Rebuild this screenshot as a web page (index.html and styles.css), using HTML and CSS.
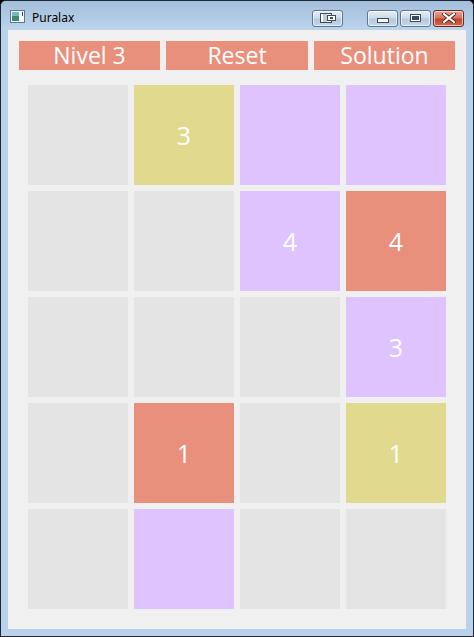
FILE: index.html
```html
<!DOCTYPE html>
<html lang="en">
<head>
  <meta charset="UTF-8">
  <title>Puralax</title>
  <link rel="stylesheet" href="styles.css">
</head>
<body>
  <div class="window">
    <div class="titlebar">
      <svg class="app-icon" width="16" height="14" viewBox="0 0 16 14">
        <rect x="0.5" y="0.5" width="14" height="12" fill="#f4f8fb" stroke="#5d7890"/>
        <rect x="2" y="2" width="7" height="9" fill="#3e8a6e"/>
        <rect x="2" y="2" width="7" height="4" fill="#6fb7c9"/>
        <rect x="12" y="2" width="1" height="4" fill="#2c4a66"/>
      </svg>
      <span class="title">Puralax</span>
      <div class="caption-btn dock">
        <svg width="16" height="10" viewBox="0 0 16 10">
          <rect x="0.5" y="0.5" width="11" height="9" fill="#fff" stroke="#3a4b5e"/>
          <line x1="4" y1="1" x2="4" y2="9" stroke="#8899aa"/>
          <line x1="6" y1="1" x2="6" y2="9" stroke="#8899aa"/>
          <rect x="7.5" y="2.5" width="8" height="5" fill="#fff" stroke="#3a4b5e"/>
          <rect x="10" y="4" width="3" height="2" fill="#3a4b5e"/>
        </svg>
      </div>
      <div class="caption-group">
        <div class="caption-btn"><span class="min-glyph"></span></div>
        <div class="caption-btn"><span class="max-glyph"></span></div>
        <div class="caption-btn close">
          <svg width="14" height="10" viewBox="0 0 14 10">
            <path d="M2 1 L12 9 M12 1 L2 9" stroke="#3a1a14" stroke-width="3.6" stroke-linecap="square"/>
            <path d="M2 1 L12 9 M12 1 L2 9" stroke="#fff" stroke-width="2.2" stroke-linecap="square"/>
          </svg>
        </div>
      </div>
    </div>

    <div class="client">
      <div class="toolbar">
        <button class="btn">Nivel 3</button>
        <button class="btn">Reset</button>
        <button class="btn">Solution</button>
      </div>

      <div class="board">
        <div class="cell"></div>
        <div class="cell yellow">3</div>
        <div class="cell purple"></div>
        <div class="cell purple"></div>

        <div class="cell"></div>
        <div class="cell"></div>
        <div class="cell purple">4</div>
        <div class="cell red">4</div>

        <div class="cell"></div>
        <div class="cell"></div>
        <div class="cell"></div>
        <div class="cell purple">3</div>

        <div class="cell"></div>
        <div class="cell red">1</div>
        <div class="cell"></div>
        <div class="cell yellow">1</div>

        <div class="cell"></div>
        <div class="cell purple"></div>
        <div class="cell"></div>
        <div class="cell"></div>
      </div>
    </div>
  </div>
</body>
</html>
```

FILE: styles.css
```css
html, body {
  margin: 0;
  padding: 0;
}
body {
  width: 474px;
  height: 637px;
  font-family: "Open Sans", "Noto Sans", sans-serif;
  background: #000;
}
.window {
  box-sizing: border-box;
  width: 474px;
  height: 637px;
  border: 1px solid #1c2733;
  border-radius: 6px 6px 0 0;
  background: #b9d1ea;
  padding: 0 7px 7px 7px;
  display: flex;
  flex-direction: column;
}
.titlebar {
  height: 29px;
  margin: 0 -7px;
  padding: 0 9px 0 9px;
  border-radius: 5px 5px 0 0;
  background: linear-gradient(to bottom, #a3bedb 0%, #b0c9e3 50%, #bcd4ec 100%);
  display: flex;
  align-items: center;
}
.app-icon {
  margin-top: 2px;
  margin-right: 6px;
}
.title {
  font-family: "Noto Sans", sans-serif;
  font-size: 12px;
  color: #000;
  margin-top: 3px;
  flex: 1;
}
.caption-group {
  display: flex;
  gap: 2px;
  margin-left: 24px;
}
.caption-btn {
  box-sizing: border-box;
  width: 31px;
  height: 17px;
  margin-top: 5px;
  border: 1px solid #5f7791;
  border-radius: 3px;
  background: linear-gradient(to bottom, #e6eef7 0%, #cddbea 45%, #b4c8de 55%, #c7d8ea 100%);
  box-shadow: inset 0 0 0 1px rgba(255,255,255,0.6);
  display: flex;
  align-items: center;
  justify-content: center;
}
.caption-btn.close {
  border-color: #6b2a20;
  background: linear-gradient(to bottom, #e8a493 0%, #d5765f 45%, #c1432c 55%, #d66a4f 100%);
}
.min-glyph {
  width: 10px;
  height: 3px;
  margin-top: 4px;
  background: #fff;
  border: 1px solid #3a4b5e;
}
.max-glyph {
  box-sizing: border-box;
  width: 11px;
  height: 8px;
  border: 1px solid #3a4b5e;
  background: #fff;
  box-shadow: inset 0 0 0 1px #fff, inset 0 0 0 3px #3a4b5e;
}
.client {
  flex: 1;
  background: #f0f0f0;
  padding: 11px 11px 0 11px;
}
.toolbar {
  display: grid;
  grid-template-columns: 141px 142px 141px;
  gap: 6px;
}
.btn {
  height: 29px;
  border: none;
  padding: 0;
  background: #e8907b;
  color: #fff;
  font-family: "Open Sans", "Noto Sans", sans-serif;
  font-size: 23px;
  line-height: 29px;
}
.board {
  display: grid;
  grid-template-columns: repeat(4, 100px);
  grid-auto-rows: 100px;
  gap: 6px;
  margin: 15px 0 0 9px;
}
.cell {
  background: #e4e4e4;
  color: #fff;
  font-size: 25px;
  display: flex;
  align-items: center;
  justify-content: center;
}
.cell.yellow {
  background: #e0d98e;
}
.cell.purple {
  background: #dfc3ff;
}
.cell.red {
  background: #e8907b;
}
```
